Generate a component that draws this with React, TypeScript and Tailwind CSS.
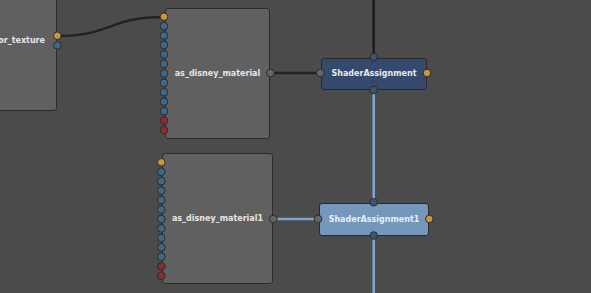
import React from "react";

type PlugColor = "y" | "b" | "r" | "g" | "d";
const fill: Record<PlugColor, string> = {
  y: "#c7983a",
  b: "#3f6789",
  r: "#8a2c31",
  g: "#656565",
  d: "#3a5476",
};

function Plug({ x, y, c }: { x: number; y: number; c: PlugColor }) {
  return <circle cx={x} cy={y} r={3.8} fill={fill[c]} stroke="#2c2c2c" strokeWidth={1} />;
}

function inputPlugs(x: number, y0: number) {
  const cols: PlugColor[] = ["y", "b", "b", "b", "b", "b", "b", "b", "b", "b", "b", "r", "r"];
  return cols.map((c, i) => <Plug key={i} x={x} y={y0 + i * 9.45} c={c} />);
}

const font = { fontFamily: '"DejaVu Sans", "Liberation Sans", sans-serif' };

export default function App() {
  return (
    <div className="relative w-[591px] h-[293px] overflow-hidden bg-[#4b4b4b]" style={font}>
      {/* connections */}
      <svg className="absolute inset-0" width={591} height={293}>
        <path d="M57 36 C112 36 108 17 164 17" stroke="#232323" strokeWidth={2.4} fill="none" />
        <line x1={373.7} y1={0} x2={373.7} y2={57} stroke="#1f1f1f" strokeWidth={2.6} />
        <line x1={270} y1={73} x2={320} y2={73} stroke="#232323" strokeWidth={2.4} />
        <line x1={373.7} y1={90} x2={373.7} y2={202} stroke="#7ea4cc" strokeWidth={2.6} />
        <line x1={273} y1={219} x2={318} y2={219} stroke="#7ea4cc" strokeWidth={2.6} />
        <line x1={373.7} y1={236} x2={373.7} y2={293} stroke="#7ea4cc" strokeWidth={2.6} />
      </svg>

      {/* node 1 (partially off-screen) */}
      <div className="absolute left-[-100px] top-[-29px] w-[157px] h-[140px] rounded-[3px] border border-[#2c2c2c] bg-[#606060] flex items-center justify-end pr-[11px]">
        <span className="text-[8px] font-bold text-[#e6e6e6] whitespace-nowrap">as_color_texture</span>
      </div>

      {/* as_disney_material */}
      <div className="absolute left-[165px] top-[8px] w-[105px] h-[131px] rounded-[3px] border border-[#2c2c2c] bg-[#606060] flex items-center justify-center">
        <span className="text-[8px] font-bold text-[#e6e6e6] whitespace-nowrap">as_disney_material</span>
      </div>

      {/* ShaderAssignment */}
      <div className="absolute left-[321px] top-[58px] w-[106px] h-[32px] rounded-[3px] border border-[#2a2a2a] bg-[#34496b] flex items-center justify-center">
        <span className="text-[8px] font-bold text-[#e6e9ee] whitespace-nowrap">ShaderAssignment</span>
      </div>

      {/* as_disney_material1 */}
      <div className="absolute left-[162px] top-[153px] w-[111px] h-[131px] rounded-[3px] border border-[#2c2c2c] bg-[#606060] flex items-center justify-center">
        <span className="text-[8px] font-bold text-[#e6e6e6] whitespace-nowrap">as_disney_material1</span>
      </div>

      {/* ShaderAssignment1 */}
      <div className="absolute left-[319px] top-[203px] w-[110px] h-[33px] rounded-[3px] border border-[#2a2a2a] bg-[#7597bb] flex items-center justify-center">
        <span className="text-[8px] font-bold text-[#e8eef5] whitespace-nowrap">ShaderAssignment1</span>
      </div>

      {/* plugs */}
      <svg className="absolute inset-0 pointer-events-none" width={591} height={293}>
        <Plug x={57.3} y={35.7} c="y" />
        <Plug x={57.3} y={45.3} c="b" />
        {inputPlugs(164, 16.7)}
        <Plug x={270.5} y={73} c="g" />
        <Plug x={373.7} y={57} c="d" />
        <Plug x={373.7} y={90} c="d" />
        <Plug x={320.3} y={73} c="g" />
        <Plug x={427} y={73} c="y" />
        {inputPlugs(161.3, 162.3)}
        <Plug x={273.3} y={219} c="g" />
        <Plug x={373.7} y={202.3} c="d" />
        <Plug x={373.7} y={235.5} c="d" />
        <Plug x={318} y={219} c="g" />
        <Plug x={429.3} y={219} c="y" />
      </svg>
    </div>
  );
}
